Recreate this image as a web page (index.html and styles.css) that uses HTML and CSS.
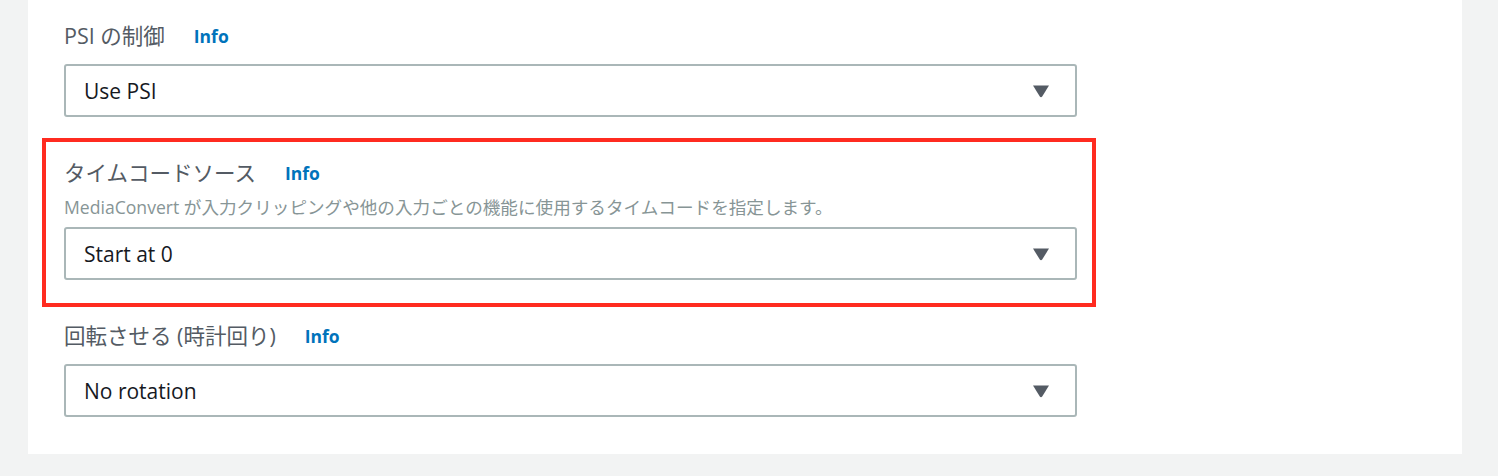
FILE: index.html
```html
<!DOCTYPE html>
<html lang="ja">
<head>
<meta charset="utf-8">
<link rel="stylesheet" href="styles.css">
<title>Settings</title>
</head>
<body>
<div class="panel">
  <div class="form">
    <div class="field">
      <div class="label"><span class="label-text">PSI の制御</span><a class="info">Info</a></div>
      <div class="select">
        <span class="value">Use PSI</span>
        <svg class="caret" width="18" height="14" viewBox="0 0 18 14"><path d="M1 1.5 H17 L10.2 12.6 Q9 14 7.8 12.6 Z" fill="#545b64"/></svg>
      </div>
    </div>
    <div class="field highlight">
      <div class="label"><span class="label-text">タイムコードソース</span><a class="info">Info</a></div>
      <div class="desc">MediaConvert が入力クリッピングや他の入力ごとの機能に使用するタイムコードを指定します。</div>
      <div class="select">
        <span class="value">Start at 0</span>
        <svg class="caret" width="18" height="14" viewBox="0 0 18 14"><path d="M1 1.5 H17 L10.2 12.6 Q9 14 7.8 12.6 Z" fill="#545b64"/></svg>
      </div>
    </div>
    <div class="field">
      <div class="label"><span class="label-text">回転させる (時計回り)</span><a class="info">Info</a></div>
      <div class="select">
        <span class="value">No rotation</span>
        <svg class="caret" width="18" height="14" viewBox="0 0 18 14"><path d="M1 1.5 H17 L10.2 12.6 Q9 14 7.8 12.6 Z" fill="#545b64"/></svg>
      </div>
    </div>
  </div>
</div>
</body>
</html>
```
FILE: styles.css
```css
html, body {
  margin: 0;
  padding: 0;
  background: #f2f3f3;
}
body {
  padding: 0 36px 0 28px;
  font-family: "Open Sans", "Noto Sans CJK JP", sans-serif;
}
.panel {
  background: #ffffff;
  height: 454px;
  box-sizing: border-box;
  padding: 24px 0 0 36px;
}
.form {
  width: 1013px;
  display: flex;
  flex-direction: column;
  gap: 44px;
}
.field {
  display: flex;
  flex-direction: column;
}
.highlight {
  border: 4px solid #ff2b20;
  margin: -23px -19px -27px -22px;
  padding: 19px 15px 23px 18px;
}
.label {
  display: flex;
  align-items: center;
  height: 24px;
  line-height: 24px;
}
.label-text {
  font-size: 21.5px;
  color: #545b64;
}
.info {
  margin-left: 29px;
  font-size: 17.5px;
  font-weight: 700;
  color: #0073bb;
}
.desc {
  margin-top: 12px;
  height: 20px;
  line-height: 20px;
  font-size: 17.6px;
  color: #879596;
}
.select {
  margin-top: 16px;
  height: 53px;
  box-sizing: border-box;
  border: 2px solid #aab7b8;
  border-radius: 3px;
  display: flex;
  align-items: center;
  justify-content: space-between;
  padding: 0 25px 0 18px;
}
.desc + .select {
  margin-top: 10px;
}
.value {
  font-size: 21px;
  color: #16191f;
}
.caret {
  display: block;
}
```
